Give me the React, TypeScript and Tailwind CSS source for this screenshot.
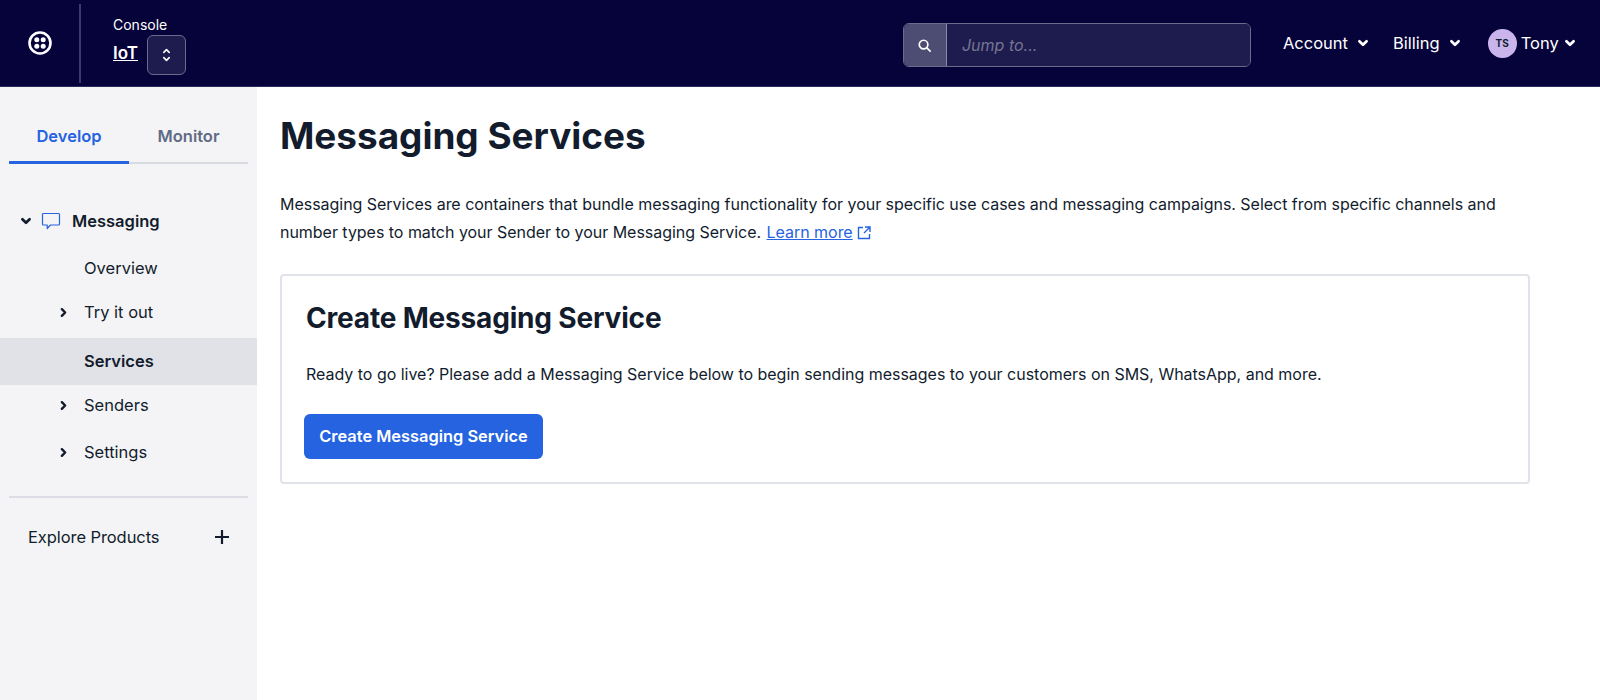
import React from "react";

const Chevron = ({ dir, className }: { dir: "down" | "right"; className?: string }) => (
  <svg viewBox="0 0 10 10" className={className} fill="none" stroke="currentColor" strokeWidth="2.2" strokeLinecap="round" strokeLinejoin="round">
    {dir === "down" ? <path d="M2 3.5 5 6.5 8 3.5" /> : <path d="M3.5 2 6.5 5 3.5 8" />}
  </svg>
);

const Logo = () => (
  <svg viewBox="0 0 24 24" className="w-6 h-6 ml-[2px]" fill="none">
    <circle cx="12" cy="12" r="10.5" stroke="white" strokeWidth="2.6" />
    <circle cx="8.8" cy="8.8" r="2.5" fill="white" />
    <circle cx="15.2" cy="8.8" r="2.5" fill="white" />
    <circle cx="8.8" cy="15.2" r="2.5" fill="white" />
    <circle cx="15.2" cy="15.2" r="2.5" fill="white" />
  </svg>
);

const NavItem = ({ label, chevron, h, active }: { label: string; chevron?: boolean; h: string; active?: boolean }) => (
  <div className={`flex items-center pl-[84px] relative ${h} ${active ? "bg-[#e1e2e8] font-semibold" : ""}`}>
    {chevron && <Chevron dir="right" className="w-[11px] h-[11px] absolute left-[58px] text-[#121c2d]" />}
    {label}
  </div>
);

export default function App() {
  return (
    <div className="w-[1600px] h-[700px] flex flex-col overflow-hidden bg-white text-[#121c2d] text-base" style={{ fontFamily: "Inter, 'Noto Sans', sans-serif" }}>
      <header className="h-[87px] shrink-0 bg-[#06033a] border-b border-[#2b2a5c] flex items-center text-white">
        <div className="w-[79px] flex justify-center pr-[2px]"><Logo /></div>
        <div className="w-[2px] h-[79px] bg-[#3c3a68]" />
        <div className="ml-[32px] flex flex-col pt-[3px]">
          <span className="text-sm leading-5">Console</span>
          <div className="flex items-center gap-[9px]">
            <span className="text-[17px] font-semibold underline mb-[2px]">IoT</span>
            <div className="w-[39px] h-[40px] rounded-md bg-[#1e1c4f] border border-[#6b6a8c] flex flex-col items-center justify-center gap-[2px]">
              <svg viewBox="0 0 10 6" className="w-[9px] h-[6px]" fill="none" stroke="white" strokeWidth="1.8" strokeLinecap="round" strokeLinejoin="round"><path d="M2 4.5 5 1.500 8 4.5" /></svg>
              <svg viewBox="0 0 10 6" className="w-[9px] h-[6px]" fill="none" stroke="white" strokeWidth="1.8" strokeLinecap="round" strokeLinejoin="round"><path d="M2 1.500 5 4.5 8 1.500" /></svg>
            </div>
          </div>
        </div>
        <div className="ml-[717px] mt-[4px] w-[348px] h-[44px] rounded-md border border-[#6b6a8c] flex overflow-hidden">
          <div className="w-[43px] bg-[#4d4c73] border-r border-[#8a89a6] flex items-center justify-center">
            <svg viewBox="0 0 16 16" className="w-[15px] h-[15px]" fill="none" stroke="white" strokeWidth="1.8" strokeLinecap="round"><circle cx="7" cy="7" r="4.6" /><path d="M10.5 10.5 14 14" /></svg>
          </div>
          <div className="flex-1 bg-[#1e1c4f] flex items-center pl-[15px] italic text-[#76758f]">Jump to...</div>
        </div>
        <div className="ml-[32px] flex items-center gap-[9px] text-[16.500px]">
          <span>Account</span>
          <Chevron dir="down" className="w-[12px] h-[12px]" />
        </div>
        <div className="ml-[24px] flex items-center gap-[9px] text-[16.500px]">
          <span>Billing</span>
          <Chevron dir="down" className="w-[12px] h-[12px]" />
        </div>
        <div className="ml-[27px] flex items-center text-[16.500px]">
          <div className="w-[29px] h-[29px] rounded-full bg-[#c9b5ec] text-[#121c2d] text-[10px] font-bold flex items-center justify-center">TS</div>
          <span className="ml-[4px]">Tony</span>
          <Chevron dir="down" className="w-[12px] h-[12px] ml-[5px]" />
        </div>
      </header>
      <div className="flex-1 flex min-h-0">
        <aside className="w-[257px] shrink-0 bg-[#f4f4f6] pt-[27px] text-[16.500px]">
          <div className="mx-[9px] w-[239px] flex h-[50px] border-b-2 border-[#d8dae2] font-semibold">
            <div className="w-[120px] h-[50px] border-b-[3px] border-[#2563e0] text-[#2563e0] flex items-center justify-center pb-[2px]">Develop</div>
            <div className="w-[119px] flex items-center justify-center pb-[4px] text-[#606b85]">Monitor</div>
          </div>
          <div className="mt-[32px] relative flex items-center h-[50px] font-semibold pl-[72px]">
            <Chevron dir="down" className="w-[12px] h-[12px] absolute left-[20px]" />
            <svg viewBox="0 0 20 18" className="w-[20px] h-[18px] absolute left-[41px] top-[16px]" fill="none" stroke="#2563e0" strokeWidth="1.2" strokeLinejoin="round"><path d="M2.500 1.500h15a1 1 0 0 1 1 1v9.500a1 1 0 0 1-1 1H9.500L6.200 16.500V13H2.500a1 1 0 0 1-1-1V2.500a1 1 0 0 1 1-1Z" /></svg>
            Messaging
          </div>
          <NavItem label="Overview" h="h-[45px]" />
          <NavItem label="Try it out" chevron h="h-[43px]" />
          <NavItem label="Services" active h="h-[47px] mt-[4px]" />
          <NavItem label="Senders" chevron h="h-[41px]" />
          <NavItem label="Settings" chevron h="h-[53px]" />
          <div className="mt-[17px] mx-[9px] w-[239px] h-[2px] bg-[#dcdde4]" />
          <div className="mt-[17px] h-[44px] pl-[28px] pr-[28px] flex items-center justify-between">
            <span className="tracking-[-0.08px]">Explore Products</span>
            <svg viewBox="0 0 14 14" className="w-[14px] h-[14px]" fill="none" stroke="#121c2d" strokeWidth="2.200"><path d="M7 0v14M0 7h14" /></svg>
          </div>
        </aside>
        <main className="flex-1 pl-[23px] pr-[70px] pt-[25px]">
          <h1 className="text-[36.900px] leading-[48px] font-bold">Messaging Services</h1>
          <p className="mt-[30px] leading-[28px] w-[1250px] tracking-[-0.03px]">
            Messaging Services are containers that bundle messaging functionality for your specific use cases and messaging campaigns. Select from specific channels and number types to match your Sender to your Messaging Service.{" "}
            <span className="text-[#2563e0] underline ml-[1px]">Learn more</span>
            <svg viewBox="0 0 14 14" className="inline w-[14px] h-[14px] ml-[4px] align-[-2px]" fill="none" stroke="#2563e0" strokeWidth="1.400"><path d="M6 1.500H1.500v11h11V8M8 1h5v5M13 1 7 7" /></svg>
          </p>
          <section className="mt-[28px] w-[1250px] h-[210px] rounded border-2 border-[#e1e3ea] pl-[24px] pt-[22px]">
            <h2 className="text-[28px] leading-[40px] font-bold tracking-[-0.18px]">Create Messaging Service</h2>
            <p className="mt-[22px] leading-[28px] tracking-[-0.02px]">Ready to go live? Please add a Messaging Service below to begin sending messages to your customers on SMS, WhatsApp, and more.</p>
            <button className="mt-[26px] ml-[-2px] w-[239px] h-[45px] rounded-md bg-[#2563e0] text-white text-[16.400px] font-semibold flex items-center justify-center">Create Messaging Service</button>
          </section>
        </main>
      </div>
    </div>
  );
}
